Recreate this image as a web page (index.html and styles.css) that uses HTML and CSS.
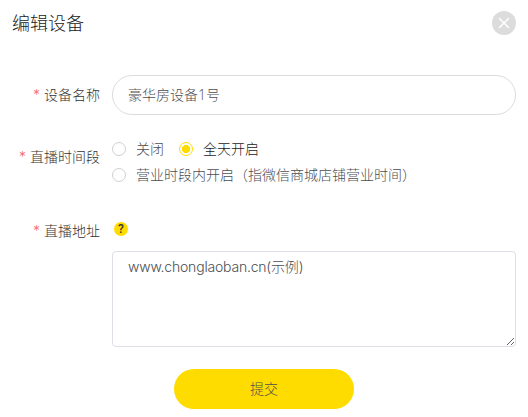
FILE: index.html
```html
<!DOCTYPE html>
<html lang="zh-CN">
<head>
    <meta charset="UTF-8">
    <meta name="viewport" content="width=device-width, initial-scale=1.0">
    <title>编辑设备</title>
    <link rel="stylesheet" href="styles.css">
</head>
<body>
    <div class="dialog">
        <div class="dialog-header">
            <h2 class="dialog-title">编辑设备</h2>
            <button type="button" class="close-btn" aria-label="关闭">
                <svg width="24" height="24" viewBox="0 0 24 24">
                    <circle cx="12" cy="12" r="12" fill="#dcdcdc"/>
                    <path d="M7.5 7.5l9 9M16.5 7.5l-9 9" stroke="#fff" stroke-width="1.5" stroke-linecap="round"/>
                </svg>
            </button>
        </div>
        <form id="deviceForm">
            <div class="form-group name-group">
                <label class="form-label" for="deviceName">设备名称</label>
                <input type="text" class="text-input" id="deviceName" name="deviceName" value="豪华房设备1号">
            </div>
            <div class="form-group time-group">
                <span class="form-label">直播时间段</span>
                <div class="radio-list">
                    <label class="radio"><input type="radio" name="period" value="off"><span>关闭</span></label>
                    <label class="radio"><input type="radio" name="period" value="all" checked><span>全天开启</span></label>
                    <label class="radio"><input type="radio" name="period" value="open"><span>营业时段内开启（指微信商城店铺营业时间）</span></label>
                </div>
            </div>
            <div class="form-group address-group">
                <label class="form-label" for="address">直播地址</label>
                <div class="address-content">
                    <span class="help">?</span>
                    <textarea class="textarea" id="address" name="address" spellcheck="false">www.chonglaoban.cn(示例)</textarea>
                </div>
            </div>
            <button type="submit" class="submit-btn">提交</button>
        </form>
    </div>
</body>
</html>
```
FILE: styles.css
```css
* {
    box-sizing: border-box;
}

body {
    margin: 0;
    background-color: #fff;
    font-family: "Noto Sans CJK SC", sans-serif;
    font-size: 14px;
    font-weight: 300;
    color: #4c4e52;
}

.dialog {
    padding: 8px 12px;
}

.dialog-header {
    display: flex;
    justify-content: space-between;
    align-items: center;
    height: 30px;
}

.dialog-title {
    margin: 0;
    padding-bottom: 3px;
    font-size: 18px;
    font-weight: 300;
    color: #222;
}

.close-btn {
    display: flex;
    padding: 0;
    border: none;
    background: none;
    cursor: pointer;
}

.form-group {
    display: flex;
}

.form-label {
    flex-shrink: 0;
    width: 100px;
    padding-right: 12px;
    line-height: 38px;
    text-align: right;
    color: #333;
}

.form-label::before {
    content: "*";
    margin-right: 4px;
    font-family: Inter, sans-serif;
    color: #f56c6c;
}

.name-group {
    margin-top: 37px;
}

.text-input {
    flex: 1;
    height: 40px;
    padding: 0 15px 2px;
    border: 1px solid #dcdcdc;
    border-radius: 20px;
    font-family: "Open Sans", "Noto Sans CJK SC", sans-serif;
    font-size: 14px;
    font-weight: 300;
    color: #4c4e52;
}

.time-group {
    height: 52px;
    margin-top: 22px;
}

.radio-list {
    flex: 1;
    display: flex;
    flex-wrap: wrap;
    align-content: flex-start;
    column-gap: 15px;
    margin-top: -1px;
}

.radio {
    display: flex;
    align-items: center;
    height: 26px;
    cursor: pointer;
}

.radio span {
    padding-bottom: 3px;
}

.radio input {
    appearance: none;
    width: 14px;
    height: 14px;
    margin: 0 10px 0 0;
    border: 1px solid #d0d0d0;
    border-radius: 50%;
}

.radio input:checked {
    border-color: #ffdc00;
    background: radial-gradient(circle, #ffdc00 3.8px, #fff 4.4px);
}

.radio input:checked + span {
    color: #222;
}

.address-group {
    margin-top: 22px;
}

.address-content {
    flex: 1;
    padding-top: 11px;
}

.help {
    display: block;
    width: 14px;
    height: 14px;
    margin: 0 0 15px 2px;
    border-radius: 50%;
    background-color: #ffdc00;
    font-family: Roboto, sans-serif;
    font-size: 12px;
    font-weight: 500;
    line-height: 14px;
    text-align: center;
    color: #333;
}

.textarea {
    display: block;
    width: 100%;
    height: 96px;
    padding: 4px 15px;
    border: 1px solid #dcdfe6;
    border-radius: 4px;
    font-family: Inter, "Noto Sans CJK SC", sans-serif;
    font-size: 14px;
    font-weight: 300;
    line-height: 21px;
    letter-spacing: -0.2px;
    color: #4c4e52;
    resize: vertical;
}

.submit-btn {
    display: block;
    width: 180px;
    height: 40px;
    margin: 22px auto 0;
    padding-bottom: 3px;
    border: none;
    border-radius: 20px;
    background-color: #ffdc00;
    font: inherit;
    color: #4c4e52;
    cursor: pointer;
}
```
